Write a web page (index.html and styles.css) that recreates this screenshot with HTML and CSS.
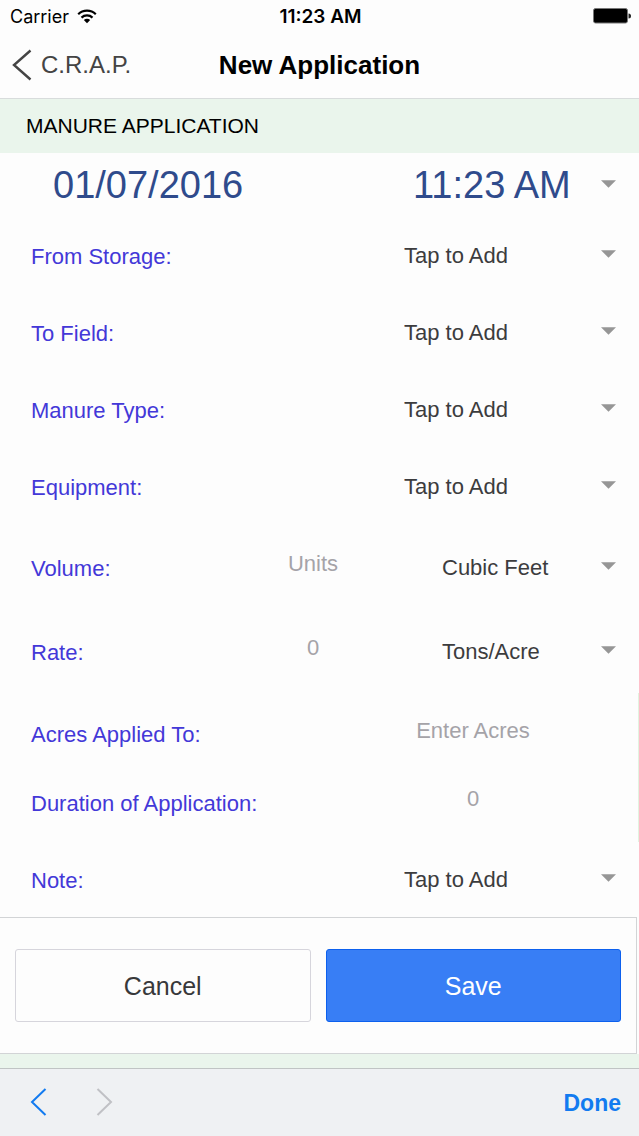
FILE: index.html
```html
<!DOCTYPE html>
<html lang="en">
<head>
<meta charset="utf-8">
<meta name="viewport" content="width=device-width, initial-scale=1">
<title>New Application</title>
<link rel="stylesheet" href="styles.css">
</head>
<body>
<svg class="defs" aria-hidden="true"><symbol id="caret" viewBox="0 0 16 8"><path d="M0 0H16L8 8Z"/></symbol></svg>
<div class="status">
  <div class="carrier"><span>Carrier</span>
    <svg width="20" height="15" viewBox="0 0 20 15" fill="none" stroke="#000" stroke-width="2.2"><path d="M1.2 5.3C6 .5 14 .5 18.800 5.300M4.500 8.600C7.500 5.700 12.500 5.700 15.500 8.600"/><path d="M6.800 11Q10 8.300 13.200 11L10 14.200Z" fill="#000" stroke="none"/></svg>
  </div>
  <span class="clock">11:23 AM</span>
  <svg class="battery" width="38" height="16" viewBox="0 0 38 16"><rect x=".5" y=".5" width="34" height="14.500" rx="2" fill="#000" stroke="#777"/><path d="M35.500 5.500Q38 5.500 38 8T35.500 10.500Z" fill="#222"/></svg>
</div>
<header class="nav">
  <a class="back" href="#"><svg width="20" height="32" viewBox="0 0 20 32" fill="none" stroke="#444" stroke-width="2.400"><path d="M18.500 1.500L2 16L18.500 30.500"/></svg><span>C.R.A.P.</span></a>
  <h1 class="title">New Application</h1>
</header>
<main class="content">
  <h2 class="section">MANURE APPLICATION</h2>
  <form class="form">
    <div class="row when">
      <input class="date" type="text" value="01/07/2016" aria-label="Date">
      <input class="time" type="text" value="11:23 AM" aria-label="Time">
      <svg class="caret"><use href="#caret"/></svg>
    </div>
    <div class="row">
      <label for="storage">From Storage:</label>
      <select id="storage"><option>Tap to Add</option></select>
      <svg class="caret"><use href="#caret"/></svg>
    </div>
    <div class="row">
      <label for="field">To Field:</label>
      <select id="field"><option>Tap to Add</option></select>
      <svg class="caret"><use href="#caret"/></svg>
    </div>
    <div class="row">
      <label for="type">Manure Type:</label>
      <select id="type"><option>Tap to Add</option></select>
      <svg class="caret"><use href="#caret"/></svg>
    </div>
    <div class="row">
      <label for="equipment">Equipment:</label>
      <select id="equipment"><option>Tap to Add</option></select>
      <svg class="caret"><use href="#caret"/></svg>
    </div>
    <div class="row measure">
      <label for="volume">Volume:</label>
      <input id="volume" type="text" placeholder="Units">
      <select aria-label="Volume unit"><option>Cubic Feet</option></select>
      <svg class="caret"><use href="#caret"/></svg>
    </div>
    <div class="row measure">
      <label for="rate">Rate:</label>
      <input id="rate" type="text" placeholder="0">
      <select aria-label="Rate unit"><option>Tons/Acre</option></select>
      <svg class="caret"><use href="#caret"/></svg>
    </div>
    <div class="totals">
      <div class="row entry">
        <label for="acres">Acres Applied To:</label>
        <input id="acres" type="text" placeholder="Enter Acres">
      </div>
      <div class="row entry short">
        <label for="duration">Duration of Application:</label>
        <input id="duration" type="text" placeholder="0">
      </div>
    </div>
    <div class="row note">
      <label for="note">Note:</label>
      <select id="note"><option>Tap to Add</option></select>
      <svg class="caret"><use href="#caret"/></svg>
    </div>
    <div class="actions">
      <button class="btn" type="button">Cancel</button>
      <button class="btn primary" type="button">Save</button>
    </div>
  </form>
</main>
<footer class="toolbar">
  <button class="step" type="button" aria-label="Previous field"><svg width="17" height="28" viewBox="0 0 17 28"><path d="M15.500 1L2 14L15.500 27"/></svg></button>
  <button class="step off" type="button" aria-label="Next field" disabled><svg width="17" height="28" viewBox="0 0 17 28"><path d="M1.500 1L15 14L1.500 27"/></svg></button>
  <button class="done" type="button">Done</button>
</footer>
</body>
</html>
```
FILE: styles.css
```css
* { box-sizing: border-box; }
body {
  margin: 0;
  min-height: 100vh;
  display: flex;
  flex-direction: column;
  background: #eaf5ec;
  color: #000;
  font-family: "Liberation Sans", Arial, sans-serif;
  font-size: 22px;
}
input, select, button {
  appearance: none;
  min-width: 0;
  margin: 0;
  padding: 0;
  border: 0;
  border-radius: 0;
  background: none;
  color: inherit;
  font: inherit;
}
.defs { display: none; }
.status {
  height: 32px;
  padding: 0 8px 0 10px;
  display: grid;
  grid-template-columns: 1fr auto 1fr;
  align-items: center;
  background: #fdfdfd;
  font-family: Inter, "Liberation Sans", sans-serif;
  font-size: 18px;
}
.carrier { display: flex; align-items: center; gap: 8px; }
.clock { font-size: 19px; font-weight: 600; }
.battery { justify-self: end; }
.nav {
  height: 67px;
  padding: 0 12px;
  display: grid;
  grid-template-columns: 1fr auto 1fr;
  align-items: center;
  background: #fdfdfd;
  border-bottom: 1px solid #d8dcdc;
}
.back {
  display: flex;
  align-items: center;
  gap: 9px;
  color: #444;
  font-size: 24px;
  text-decoration: none;
}
.title { margin: 0; font-size: 26px; font-weight: bold; }
.content { flex: 1; }
.section {
  margin: 0;
  padding: 0 26px;
  line-height: 54px;
  font-size: 21px;
  font-weight: normal;
}
.form { background: #fdfdfd; }
.row {
  min-height: 77px;
  padding: 0 23px 0 31px;
  display: grid;
  grid-template-columns: 1fr 197px 15px;
  align-items: center;
}
label { padding-top: 3px; color: #4338d8; }
select { color: #3c3c3e; }
input { width: 100%; text-align: center; }
.row input::placeholder { color: #a5a3a8; opacity: 1; }
.caret { width: 15px; height: 8px; fill: #969696; margin-bottom: 3px; }
.when {
  min-height: 64px;
  padding-left: 53px;
  grid-template-columns: 1fr 188px 15px;
  color: #2f4b8c;
  font-size: 38px;
}
.when input { text-align: left; }
.measure {
  min-height: 84px;
  grid-template-columns: 1fr 100px 79px 159px 15px;
}
.measure input { grid-column: 2; padding-bottom: 6px; }
.measure select { grid-column: 4; }
.totals { padding: 2px 0 10px; border-right: 1px solid #e2f3e0; }
.entry { grid-template-columns: 1fr 284px; }
.entry input { padding-bottom: 6px; }
.short { min-height: 60px; }
.note { min-height: 75px; }
.actions {
  width: calc(100% - 2px);
  padding: 31px 15px;
  display: grid;
  grid-template-columns: 1fr 1fr;
  gap: 15px;
  border: 1px solid #d2d4d6;
  border-left: 0;
}
.btn {
  height: 73px;
  padding-top: 2px;
  border: 1px solid #d6d5dc;
  border-radius: 3px;
  color: #38383a;
  font-size: 25px;
}
.primary { border-color: #0c60ee; background: #387ef5; color: #fff; }
.toolbar {
  height: 68px;
  padding: 0 18px 0 30px;
  display: flex;
  align-items: center;
  gap: 49px;
  background: #eff1f3;
  border-top: 1px solid #c0c4c4;
}
.step { padding-bottom: 2px; }
.step svg { display: block; fill: none; stroke: #127bf0; stroke-width: 2; }
.off svg { stroke: #c0c1c5; }
.done { margin-left: auto; padding-top: 2px; color: #127bf0; font-size: 23px; font-weight: bold; }
```
